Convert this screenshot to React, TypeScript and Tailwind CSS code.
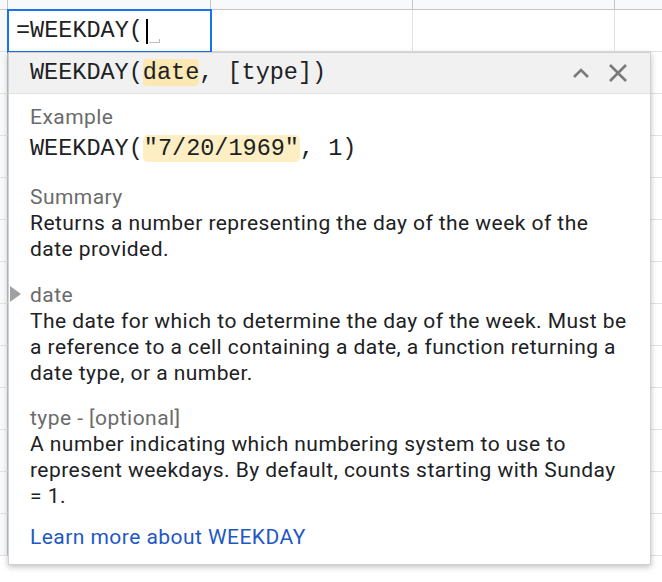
import React from "react";

const ROWS = 13;

function Sheet() {
  const rows = Array.from({ length: ROWS });
  return (
    <div className="flex flex-col">
      <div className="flex h-[10px] bg-[#f8f9fa] border-b border-[#c4c7c5]">
        <div className="w-[8px] border-r border-[#c4c7c5]" />
        <div className="w-[203px] border-r border-[#c4c7c5]" />
        <div className="w-[202px] border-r border-[#c4c7c5]" />
        <div className="w-[202px] border-r border-[#c4c7c5]" />
        <div className="flex-1" />
      </div>
      {rows.map((_, i) => (
        <div key={i} className="flex h-[42px] shrink-0 border-b border-[#e2e3e3]">
          <div className="w-[8px] bg-[#f8f9fa] border-r border-[#c4c7c5]" />
          <div className="w-[203px] border-r border-[#e2e3e3]" />
          <div className="w-[202px] border-r border-[#e2e3e3]" />
          <div className="w-[202px] border-r border-[#e2e3e3]" />
          <div className="flex-1" />
        </div>
      ))}
    </div>
  );
}

const mono = "font-['Liberation_Mono','DejaVu_Sans_Mono',monospace]";
const sans = "font-['Roboto','Liberation_Sans',sans-serif]";

export default function App() {
  return (
    <div className="relative w-[662px] h-[582px] overflow-hidden bg-white">
      <Sheet />
      {/* active cell */}
      <div className="absolute left-[7px] top-[9px] w-[205px] h-[44px] border-2 border-[#1a73e8] bg-white flex items-center pl-[7px]">
        <span className={`${mono} text-[23.5px] leading-none text-[#202124] tracking-[0px]`}>=WEEKDAY(</span>
        <span className="ml-[3px] w-[2px] h-[25px] bg-black" />
        <span className="ml-[1px] mt-[20px] w-[11px] h-[4px] border-r border-b border-[#bdbdbd]" />
      </div>
      {/* popup */}
      <div className="absolute left-[8px] top-[52px] w-[643px] h-[513px] bg-white border border-[#d0d0d0] shadow-[0_2px_6px_rgba(0,0,0,0.25)]">
        <div className="h-[41px] bg-[#f1f1f1] border-b border-[#e3e3e3] flex items-center pl-[21px] pr-[22px]">
          <span className={`${mono} text-[23.5px] leading-none text-[#202124] flex-1`}>
            WEEKDAY(<span className="bg-[#fce8b2] rounded-[4px]">date</span>, [type])
          </span>
          <svg width="20" height="14" viewBox="0 0 20 14" className="mr-[17px]">
            <path d="M3 11 L10 4 L17 11" fill="none" stroke="#7a7a7a" strokeWidth="2.6" />
          </svg>
          <svg width="20" height="20" viewBox="0 0 20 20">
            <path d="M2 2 L18 18 M18 2 L2 18" fill="none" stroke="#7a7a7a" strokeWidth="2.6" />
          </svg>
        </div>
        <div className={`${sans} pl-[21px] pt-[10px] text-[21px] tracking-[0.45px] leading-[26px] text-[#202124]`}>
          <div className="text-[#6b6b6b]">Example</div>
          <div className={`${mono} text-[23.5px] tracking-[0px] leading-[32px] mt-[3px]`}>
            WEEKDAY(<span className="bg-[#fdefc3] rounded-[5px] px-[1px]">"7/20/1969"</span>, 1)
          </div>
          <div className="mt-[19px] text-[#6b6b6b]">Summary</div>
          <div>Returns a number representing the day of the week of the</div>
          <div>date provided.</div>
          <div className="mt-[20px] text-[#6b6b6b]">date</div>
          <div>The date for which to determine the day of the week. Must be</div>
          <div>a reference to a cell containing a date, a function returning a</div>
          <div>date type, or a number.</div>
          <div className="mt-[19px] text-[#6b6b6b]">type - [optional]</div>
          <div>A number indicating which numbering system to use to</div>
          <div>represent weekdays. By default, counts starting with Sunday</div>
          <div>= 1.</div>
          <div className="mt-[15px] text-[#1f58c4]">Learn more about WEEKDAY</div>
        </div>
      </div>
      {/* side arrow */}
      <svg className="absolute left-[10px] top-[286px]" width="12" height="16" viewBox="0 0 12 16">
        <path d="M0 0 L11 8 L0 16 Z" fill="#a0a0a0" />
      </svg>
    </div>
  );
}
